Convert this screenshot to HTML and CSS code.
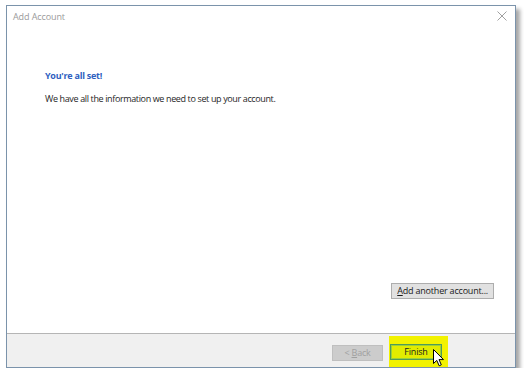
FILE: index.html
```html
<!DOCTYPE html>
<html lang="en">
<head>
    <meta charset="UTF-8">
    <title>Add Account</title>
    <link rel="stylesheet" href="styles.css">
</head>
<body>

    <div class="dialog">

        <!-- Title bar -->
        <div class="title-bar">
            <span class="title">Add Account</span>
            <svg class="close-icon" width="10" height="10" viewBox="0 0 10 10">
                <path d="M0.5 0.5 L9.5 9.5 M9.5 0.5 L0.5 9.5" stroke="#a0a0a0" stroke-width="1" fill="none"/>
            </svg>
        </div>

        <!-- Main content -->
        <div class="content">
            <h1 class="heading">You're all set!</h1>
            <p class="message">We have all the information we need to set up your account.</p>

            <div class="content-actions">
                <button class="btn"><u>A</u>dd another account...</button>
            </div>
        </div>

        <!-- Footer buttons -->
        <div class="footer">
            <button class="btn btn-disabled">&lt; <u>B</u>ack</button>
            <span class="highlight">
                <button class="btn btn-default">Finish</button>
                <svg class="cursor" width="12" height="18" viewBox="0 0 12 18">
                    <path d="M0.5 0.5 L0.5 14.5 L3.8 11.4 L6.2 16.8 L8.3 15.8 L6 10.6 L10.5 10.6 Z" fill="#ffffff" stroke="#000000" stroke-width="1" stroke-linejoin="round"/>
                </svg>
            </span>
        </div>

    </div>

</body>
</html>
```

FILE: styles.css
```css
body {
    margin: 0;
    background-color: #ffffff;
    font-family: "Open Sans", "Noto Sans", sans-serif;
    font-size: 9px;
    color: #262626;
}
.dialog {
    margin: 5px 0 0 6px;
    width: 508px;
    height: 361px;
    border: 1px solid #7b93ab;
    background-color: #ffffff;
    box-shadow: 4px 4px 4px rgba(0, 0, 0, 0.35);
    display: flex;
    flex-direction: column;
}
.title-bar {
    height: 20px;
    display: flex;
    align-items: center;
    justify-content: space-between;
    padding: 0 8px 0 6px;
}
.title {
    color: #9a9a9a;
    font-size: 9px;
    letter-spacing: -0.1px;
}
.close-icon {
    display: block;
}
.content {
    flex: 1;
    display: flex;
    flex-direction: column;
    padding: 43px 21px 0 38px;
}
.heading {
    margin: 0;
    font-size: 9px;
    font-weight: bold;
    color: #2f5fbf;
    letter-spacing: -0.25px;
}
.message {
    margin: 10px 0 0 0;
    letter-spacing: -0.37px;
}
.content-actions {
    margin-top: auto;
    margin-bottom: 34px;
    display: flex;
    justify-content: flex-end;
}
.btn {
    font-family: inherit;
    font-size: 9px;
    color: #1a1a1a;
    background-color: #e1e1e1;
    border: 1px solid #adadad;
    height: 16px;
    padding: 0 5px;
    margin: 0;
    line-height: 14px;
    letter-spacing: -0.2px;
}
.footer {
    height: 31px;
    border-top: 1px solid #b5b5b5;
    background-color: #f0f0f0;
    display: flex;
    justify-content: flex-end;
    align-items: flex-start;
    padding: 2px 67px 0 0;
    gap: 6px;
}
.btn-disabled {
    margin-top: 9px;
    width: 51px;
    background-color: #cccccc;
    border-color: #bfbfbf;
    color: #a0a0a0;
}
.highlight {
    position: relative;
    display: flex;
    background-color: #f2f200;
    padding: 8px 6px 7px 1px;
}
.btn-default {
    width: 52px;
    background-color: #e2ec00;
    border: 1px solid #4f9b5a;
    box-shadow: inset 0 0 0 1px #9cd036;
}
.cursor {
    position: absolute;
    left: 44px;
    top: 13px;
}
```
